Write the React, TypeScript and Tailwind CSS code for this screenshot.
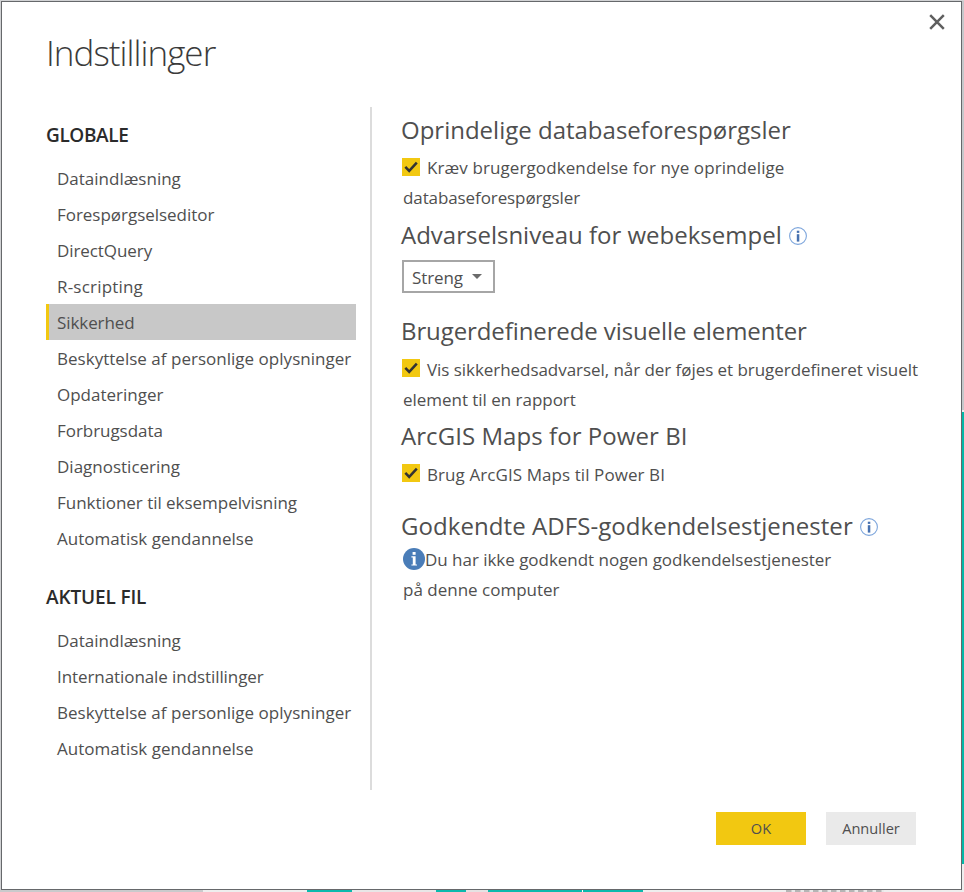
import React from "react";

const globalItems = [
  { label: "Dataindlæsning", tracking: "" },
  { label: "Forespørgselseditor", tracking: "tracking-[-0.03px]" },
  { label: "DirectQuery", tracking: "tracking-[-0.08px]" },
  { label: "R-scripting", tracking: "tracking-[0.2px]" },
  { label: "Sikkerhed", tracking: "tracking-[-0.08px]" },
  { label: "Beskyttelse af personlige oplysninger", tracking: "tracking-[0.02px]" },
  { label: "Opdateringer", tracking: "" },
  { label: "Forbrugsdata", tracking: "tracking-[-0.05px]" },
  { label: "Diagnosticering", tracking: "" },
  { label: "Funktioner til eksempelvisning", tracking: "tracking-[-0.03px]" },
  { label: "Automatisk gendannelse", tracking: "tracking-[0.03px]" },
];

const fileItems = [
  { label: "Dataindlæsning", tracking: "" },
  { label: "Internationale indstillinger", tracking: "tracking-[-0.08px]" },
  { label: "Beskyttelse af personlige oplysninger", tracking: "tracking-[0.02px]" },
  { label: "Automatisk gendannelse", tracking: "tracking-[0.03px]" },
];

function NavList({ items, selected }: { items: typeof globalItems; selected?: string }) {
  return (
    <ul>
      {items.map(({ label, tracking }) => (
        <li
          key={label}
          className={`h-9 whitespace-nowrap border-l-[3px] pl-2 pt-px text-[17px] leading-9 ${tracking} ${
            label === selected ? "border-[#f2c811] bg-[#c8c8c8]" : "border-transparent"
          }`}
        >
          {label}
        </li>
      ))}
    </ul>
  );
}

function Check({ align }: { align: string }) {
  return (
    <span className={`mr-[7px] inline-block size-[18px] bg-[#f2c811] ${align}`}>
      <svg viewBox="0 0 18 18" className="block size-[18px]" fill="none" stroke="#333" strokeWidth="2.5">
        <path d="M3.3 8.9 7.2 12.9 14.8 4.6" />
      </svg>
    </span>
  );
}

function InfoOutline() {
  return (
    <svg viewBox="0 0 18 18" className="mt-[2px] size-[18px] shrink-0">
      <circle cx="9" cy="9" r="8.4" fill="none" stroke="#7ea6dc" strokeWidth="1.1" />
      <rect x="7.8" y="3.7" width="2.5" height="2.2" fill="#4671b0" />
      <rect x="7.8" y="7.2" width="2.5" height="7.4" fill="#4671b0" />
    </svg>
  );
}

function Heading({ children, className }: { children: React.ReactNode; className: string }) {
  return (
    <h2 className={`-ml-px flex h-[34px] items-center whitespace-nowrap text-[24px] leading-[34px] ${className}`}>
      {children}
    </h2>
  );
}

export default function App() {
  return (
    <div className="flex h-[892px] w-[964px] flex-col overflow-hidden bg-[#d1d2d4] font-['Open_Sans','Noto_Sans',sans-serif] text-[#4f4f4f]">
      <div className="flex h-[890px] pl-px pt-px">
        <div className="flex h-[889px] w-[961px] flex-col border border-[#66686b] bg-white">
          <header className="flex h-[105px] justify-between">
            <h1 className="ml-11 mt-[27px] h-12 text-[35px] font-light leading-[48px] tracking-[-0.95px] text-[#3b3b3b]">
              Indstillinger
            </h1>
            <svg viewBox="0 0 16 16" className="mr-4 mt-3 size-4" stroke="#5f5f5f" strokeWidth="2.5">
              <path d="M1.2 1.2 14.8 14.8M14.8 1.2 1.2 14.8" />
            </svg>
          </header>

          <main className="flex h-[683px]">
            <nav className="ml-11 w-[310px]">
              <h3 className="h-[53px] pt-[14px] text-[19px] font-semibold leading-[28px] tracking-[-0.38px] text-[#2b2b2b]">
                GLOBALE
              </h3>
              <NavList items={globalItems} selected="Sikkerhed" />
              <h3 className="h-[66px] pt-[27px] text-[19px] font-semibold leading-[28px] tracking-[-0.14px] text-[#2b2b2b]">
                AKTUEL FIL
              </h3>
              <NavList items={fileItems} />
            </nav>

            <section className="ml-[14px] w-[560px] border-l-2 border-[#dcdcdc] pl-[30px] text-[17px] leading-[30px]">
              <Heading className="mt-[6px]">Oprindelige databaseforespørgsler</Heading>
              <p className="mt-[6px] whitespace-nowrap">
                <Check align="align-[-2px]" />
                <span className="tracking-[0.1px]">Kræv brugergodkendelse for nye oprindelige</span>
                <br />
                <span className="ml-px tracking-[-0.1px]">databaseforespørgsler</span>
              </p>
              <Heading className="mt-[5px] gap-[7px]">
                Advarselsniveau for webeksempel
                <InfoOutline />
              </Heading>
              <button className="mt-2 flex h-[33px] w-[93px] items-center border-2 border-[#a6a6a6] pl-2 text-[17px] leading-[29px]">
                <span className="pt-[2px] tracking-[-0.1px]">Streng</span>
                <svg viewBox="0 0 10 5" className="ml-[9px] h-[5px] w-[10px]" fill="#6b6b6b">
                  <path d="M0 0H10L5 5Z" />
                </svg>
              </button>
              <Heading className="mt-[21px] tracking-[-0.1px]">Brugerdefinerede visuelle elementer</Heading>
              <p className="mt-[7px] whitespace-nowrap">
                <Check align="align-[-1px]" />
                <span className="tracking-[-0.05px]">
                  Vis sikkerhedsadvarsel, når der føjes et brugerdefineret visuelt
                </span>
                <br />
                <span className="ml-px tracking-[-0.03px]">element til en rapport</span>
              </p>
              <Heading className="mt-1 tracking-[0.06px]">ArcGIS Maps for Power BI</Heading>
              <p className="mt-[7px] whitespace-nowrap">
                <Check align="align-[-1px]" />
                <span className="tracking-[0.08px]">Brug ArcGIS Maps til Power BI</span>
              </p>
              <Heading className="mt-[19px] gap-[7px]">
                <span className="tracking-[0.07px]">Godkendte ADFS-godkendelsestjenester</span>
                <InfoOutline />
              </Heading>
              <p className="mt-[2px] whitespace-nowrap">
                <svg viewBox="0 0 22 22" className="ml-px inline-block size-[22px] align-[-4px]">
                  <circle cx="11" cy="11" r="11" fill="#4a7db8" />
                  <rect x="9.6" y="4" width="3" height="2.8" fill="#fff" />
                  <path d="M8.4 8.3H12.6V16.4H14V17.6H8.4V16.4H9.8V9.5H8.4Z" fill="#fff" />
                </svg>
                <span className="tracking-[-0.03px]">Du har ikke godkendt nogen godkendelsestjenester</span>
                <br />
                <span className="ml-px">på denne computer</span>
              </p>
            </section>
          </main>

          <footer className="mt-[22px] flex justify-end gap-5 pr-[45px] text-[14.6px] leading-[33px]">
            <button className="h-[33px] w-[90px] bg-[#f2c811]">OK</button>
            <button className="h-[33px] w-[90px] bg-[#eaeaea]">Annuller</button>
          </footer>
        </div>
        <div className="flex w-[2px] flex-col">
          <div className="h-[409px] bg-[#c6c8cb]" />
          <div className="h-[2px] bg-[#eeeeee]" />
          <div className="h-[452px] bg-[#04b8a8]" />
          <div className="h-[26px] bg-[#eeeeee]" />
        </div>
      </div>
      <div className="flex h-[2px]">
        <div className="w-[203px] bg-[#c9cacc]" />
        <div className="w-[104px] bg-[#eeeeee]" />
        <div className="w-[45px] bg-[#0bb9ad]" />
        <div className="w-[84px] bg-[#e8e6e7]" />
        <div className="w-[30px] bg-[#0bb9ad]" />
        <div className="w-[22px] bg-[#e5e2e3]" />
        <div className="w-[94px] bg-[#0bb9ad]" />
        <div className="w-px bg-white" />
        <div className="w-[60px] bg-[#0bb9ad]" />
        <div className="w-[143px] bg-[#eeeeee]" />
        <div className="w-[98px] overflow-hidden bg-[repeating-linear-gradient(90deg,#b5b5b5_0px,#b5b5b5_5px,#e8e8e8_6px,#e8e8e8_9px)]" />
        <div className="w-[80px] bg-[#eeeeee]" />
      </div>
    </div>
  );
}
